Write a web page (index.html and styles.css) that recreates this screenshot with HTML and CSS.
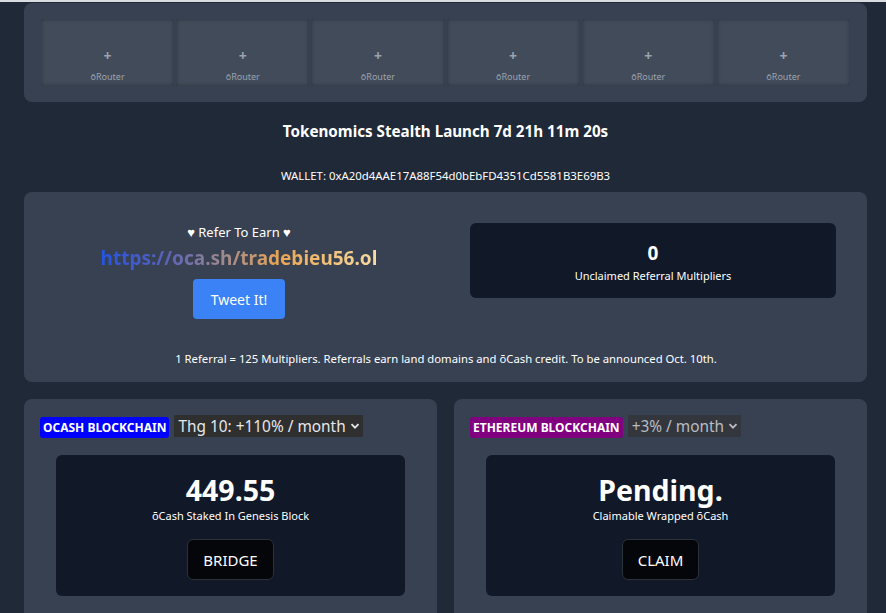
FILE: index.html
```html
<!DOCTYPE html>
<html lang="en">
<head>
    <meta charset="UTF-8">
    <meta name="viewport" content="width=device-width, initial-scale=1.0">
    <title>ōCash Dashboard</title>
    <link rel="stylesheet" href="styles.css">
</head>
<body>
    <div class="topline"></div>
    <main class="page">
        <section class="card routers">
            <div class="slot"><span class="plus">+</span><span class="slot-name">ōRouter</span></div>
            <div class="slot"><span class="plus">+</span><span class="slot-name">ōRouter</span></div>
            <div class="slot"><span class="plus">+</span><span class="slot-name">ōRouter</span></div>
            <div class="slot"><span class="plus">+</span><span class="slot-name">ōRouter</span></div>
            <div class="slot"><span class="plus">+</span><span class="slot-name">ōRouter</span></div>
            <div class="slot"><span class="plus">+</span><span class="slot-name">ōRouter</span></div>
        </section>

        <h2 class="launch">Tokenomics Stealth Launch 7d 21h 11m 20s</h2>
        <p class="wallet">WALLET: 0xA20d4AAE17A88F54d0bEbFD4351Cd5581B3E69B3</p>

        <section class="card referral">
            <div class="ref-grid">
                <div class="ref-left">
                    <div class="ref-title">♥ Refer To Earn ♥</div>
                    <div class="ref-link">https://oca.sh/tradebieu56.ol</div>
                    <button class="tweet">Tweet It!</button>
                </div>
                <div class="stat-box">
                    <div class="stat-num">0</div>
                    <div class="stat-label">Unclaimed Referral Multipliers</div>
                </div>
            </div>
            <p class="ref-note">1 Referral = 125 Multipliers. Referrals earn land domains and ōCash credit. To be announced Oct. 10th.</p>
        </section>

        <div class="chains">
            <section class="card chain">
                <div class="chain-head">
                    <span class="badge ocash">OCASH BLOCKCHAIN</span>
                    <div class="rate">Thg 10: +110% / month
                        <svg width="10" height="10" viewBox="0 0 10 10"><path d="M1.5 3.2 5 6.7 8.5 3.2" fill="none" stroke="currentColor" stroke-width="1.8"/></svg>
                    </div>
                </div>
                <div class="chain-box">
                    <div class="chain-value">449.55</div>
                    <div class="chain-label">ōCash Staked In Genesis Block</div>
                    <button class="dark-btn">BRIDGE</button>
                </div>
            </section>
            <section class="card chain">
                <div class="chain-head">
                    <span class="badge eth">ETHEREUM BLOCKCHAIN</span>
                    <div class="rate muted">+3% / month
                        <svg width="10" height="10" viewBox="0 0 10 10"><path d="M1.5 3.2 5 6.7 8.5 3.2" fill="none" stroke="currentColor" stroke-width="1.8"/></svg>
                    </div>
                </div>
                <div class="chain-box">
                    <div class="chain-value">Pending.</div>
                    <div class="chain-label">Claimable Wrapped ōCash</div>
                    <button class="dark-btn">CLAIM</button>
                </div>
            </section>
        </div>
    </main>
</body>
</html>
```

FILE: styles.css
```css
body {
    margin: 0;
    background: #1f2937;
    color: #fff;
    font-family: 'Noto Sans', 'Open Sans', sans-serif;
    overflow: hidden;
}

.topline {
    height: 2px;
    background: #d9dbde;
}

.page {
    padding: 1px 19px 0 24px;
}

.card {
    background: #374151;
    border-radius: 8px;
}

/* Router slots */
.routers {
    display: grid;
    grid-template-columns: repeat(6, 1fr);
    gap: 2px;
    padding: 16px 17px;
}

.slot {
    height: 67px;
    background: #424b5a;
    box-shadow: inset 0 0 4px rgba(0,0,0,0.35);
    border-radius: 2px;
    display: flex;
    flex-direction: column;
    align-items: center;
    justify-content: flex-end;
    padding-bottom: 3px;
    box-sizing: border-box;
    color: #9ca3af;
}

.plus {
    font-size: 14px;
    font-weight: bold;
    line-height: 14px;
    margin-bottom: 8px;
}

.slot-name {
    font-size: 9px;
    line-height: 12px;
}

.launch {
    margin: 17px 0 0;
    text-align: center;
    font-size: 15.2px;
    line-height: 24px;
    font-weight: bold;
}

.wallet {
    margin: 25px 0 0;
    text-align: center;
    font-size: 11.4px;
    line-height: 16px;
}

/* Referral */
.referral {
    margin-top: 8px;
    padding: 31px 31px 14px 32px;
}

.ref-grid {
    display: grid;
    grid-template-columns: 1fr 1fr;
    gap: 48px;
    align-items: start;
}

.ref-left {
    display: flex;
    flex-direction: column;
    align-items: center;
}

.ref-title {
    font-size: 13px;
    line-height: 18px;
}

.ref-link {
    margin-top: 4px;
    font-size: 19px;
    line-height: 26px;
    font-weight: bold;
    background: linear-gradient(to right, #2554e4 0%, #5d63b8 25%, #a08a8a 45%, #eba553 65%, #f8dca2 100%);
    -webkit-background-clip: text;
    background-clip: text;
    color: transparent;
}

.tweet {
    margin-top: 8px;
    width: 92px;
    height: 40px;
    border: none;
    border-radius: 4px;
    background: #3b82f6;
    color: #fff;
    font-family: inherit;
    font-size: 14px;
}

.stat-box {
    background: #111827;
    border-radius: 6px;
    height: 75px;
    box-sizing: border-box;
    padding-top: 17px;
    text-align: center;
}

.stat-num {
    font-size: 19px;
    line-height: 26px;
    font-weight: bold;
}

.stat-label {
    font-size: 11px;
    line-height: 16px;
    margin-top: 2px;
}

.ref-note {
    margin: 31px 0 0;
    text-align: center;
    font-size: 11.3px;
    line-height: 18px;
}

/* Chains */
.chains {
    margin-top: 17px;
    display: grid;
    grid-template-columns: 1fr 1fr;
    gap: 17px;
}

.chain {
    padding: 16px 16px 40px;
}

.chain-head {
    display: flex;
    align-items: center;
    gap: 5px;
    height: 22px;
}

.badge {
    font-size: 12px;
    font-weight: bold;
    line-height: 21px;
    padding: 0 3px;
    border-radius: 3px;
    margin-top: 2px;
}

.badge.ocash { background: #0000ff; }
.badge.eth { background: #800080; }

.rate {
    display: flex;
    align-items: center;
    gap: 4px;
    height: 22px;
    padding: 0 3px 0 4px;
    background: #2f2f30;
    color: #e5e7eb;
    font-size: 15.4px;
}

.rate.muted {
    color: #b9bcc2;
    background: #33373d;
}

.chain-box {
    margin: 18px 16px 0;
    background: #111827;
    border-radius: 6px;
    padding: 20px 0 16px;
    display: flex;
    flex-direction: column;
    align-items: center;
}

.chain-value {
    font-size: 28.5px;
    line-height: 30px;
    font-weight: bold;
}

.chain-label {
    margin-top: 3px;
    font-size: 11px;
    line-height: 16px;
}

.dark-btn {
    margin-top: 15px;
    height: 41px;
    padding: 0 15px;
    background: #050609;
    border: 1px solid #2d3139;
    border-radius: 6px;
    color: #fff;
    font-family: inherit;
    font-size: 15px;
}
```
